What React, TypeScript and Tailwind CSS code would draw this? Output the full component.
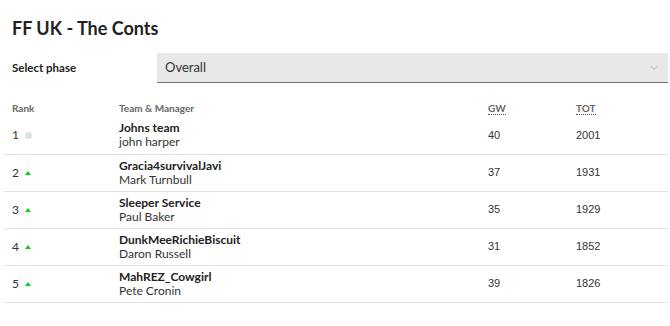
import { ChevronDown } from 'lucide-react';

const rows = [
    { rank: 1, team: 'Johns team', manager: 'john harper', gw: 40, tot: 2001, move: 'same' },
    { rank: 2, team: 'Gracia4survivalJavi', manager: 'Mark Turnbull', gw: 37, tot: 1931, move: 'up' },
    { rank: 3, team: 'Sleeper Service', manager: 'Paul Baker', gw: 35, tot: 1929, move: 'up' },
    { rank: 4, team: 'DunkMeeRichieBiscuit', manager: 'Daron Russell', gw: 31, tot: 1852, move: 'up' },
    { rank: 5, team: 'MahREZ_Cowgirl', manager: 'Pete Cronin', gw: 39, tot: 1826, move: 'up' },
];

export default function App() {
    return (
        <div className="h-[326px] w-[670px] bg-white font-['Lato',sans-serif] text-[#37003c]">
            <h2 className="pl-3 pt-[17px] text-[18px] leading-[22px] font-bold text-[#222]">FF UK - The Conts</h2>

            {/* PHASE SELECT */}
            <div className="mt-[14px] flex items-center">
                <label className="w-[157px] shrink-0 pl-3 text-[11.5px] font-bold text-[#222]">Select phase</label>
                <div className="flex h-[30px] w-[511px] items-center justify-between border-b border-[#76766f] bg-[#e8e8e8] pr-2 pl-[8px]">
                    <span className="text-[13px] text-[#333]">Overall</span>
                    <ChevronDown className="h-3 w-3 text-[#a0a0a0]" strokeWidth={1.5} />
                </div>
            </div>

            {/* STANDINGS */}
            <table className="mt-[18px] ml-1 w-[664px] table-fixed border-collapse text-left">
                <thead>
                    <tr className="text-[10px] font-bold text-[#666]">
                        <th className="w-[115px] pb-[1px] pl-2 font-bold">Rank</th>
                        <th className="w-[369px] pb-[1px] font-bold">Team &amp; Manager</th>
                        <th className="w-[88px] pb-[1px] font-bold">
                            <abbr className="border-b border-dotted border-[#555] no-underline">GW</abbr>
                        </th>
                        <th className="pb-[1px] font-bold">
                            <abbr className="border-b border-dotted border-[#555] no-underline">TOT</abbr>
                        </th>
                    </tr>
                </thead>
                <tbody>
                    {rows.map((r) => (
                        <tr key={r.rank} className="h-[37px] border-b border-[#e3e3e3] text-[#333]">
                            <td className="pl-2 text-[12px]">
                                <span className="inline-flex items-center gap-[6px]">
                                    {r.rank}
                                    {r.move === 'same' ? (
                                        <span className="inline-block h-[7px] w-[7px] rounded-full bg-[#e0e0e0]" />
                                    ) : (
                                        <span className="inline-block h-0 w-0 border-x-[3px] border-b-[4px] border-x-transparent border-b-[#0bd10b]" />
                                    )}
                                </span>
                            </td>
                            <td className="leading-[14px]">
                                <div className="text-[12px] font-bold text-[#222]">{r.team}</div>
                                <div className="text-[12px] text-[#333]">{r.manager}</div>
                            </td>
                            <td className="font-['Liberation_Sans',sans-serif] text-[11px]">{r.gw}</td>
                            <td className="font-['Liberation_Sans',sans-serif] text-[11px]">{r.tot}</td>
                        </tr>
                    ))}
                </tbody>
            </table>
        </div>
    );
}
